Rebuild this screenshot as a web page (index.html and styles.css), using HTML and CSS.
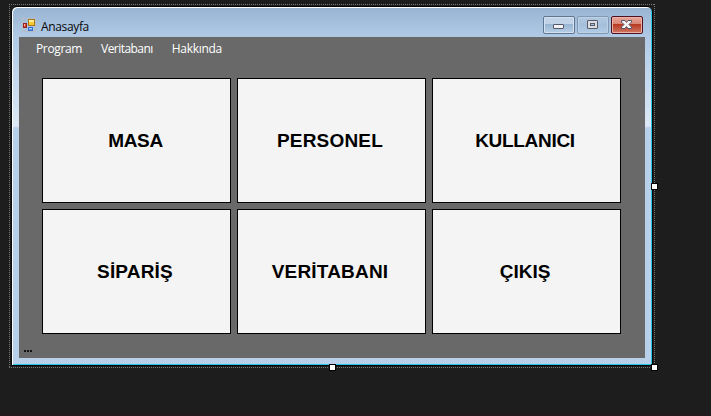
FILE: index.html
```html
<!DOCTYPE html>
<html lang="tr">
<head>
<meta charset="utf-8">
<title>Anasayfa</title>
<link rel="stylesheet" href="styles.css">
</head>
<body>
<main class="selection">
  <svg class="outline" width="646" height="364" viewBox="0 0 646 364" shape-rendering="crispEdges"><path d="M0 .5H646M0 363.5H646M.5 0V364M645.5 0V364" stroke="#777" stroke-dasharray="1 1"/></svg>
  <section class="window">
    <header class="titlebar">
      <svg class="app-icon" width="14" height="14" viewBox="0 0 14 14" shape-rendering="crispEdges">
        <path d="M.5 13.500V.5H13.500V13.500Z" fill="none" stroke="#b8bcc3"/>
        <rect x="6.500" y="1.500" width="6" height="6" fill="#f8c832" stroke="#a77a16"/><path d="M7 2h5v2H7z" fill="#ffed9c"/>
        <rect x="1.500" y="5.500" width="3" height="4" fill="#d64a36" stroke="#952222"/><path d="M2 6h1v2H2z" fill="#ffb0a0"/>
        <rect x="6.500" y="9.500" width="4" height="3" fill="#609df4" stroke="#3970c8"/><path d="M7 10h3v1H7z" fill="#a4cbff"/>
      </svg>
      <h1 class="title">Anasayfa</h1>
      <div class="controls">
        <span class="control"><svg width="30" height="16" viewBox="0 0 30 16"><rect x="9.500" y="7.500" width="10" height="4" rx=".5" fill="#f4f4f4" stroke="#57586b"/></svg></span>
        <span class="control disabled"><svg width="30" height="16" viewBox="0 0 30 16"><rect x="9.500" y="3.500" width="10" height="8" rx=".5" fill="#dcdce0" stroke="#565b6b"/><rect x="12.500" y="6.500" width="4" height="2" fill="#a9c3de" stroke="#565b6b"/></svg></span>
        <span class="control close"><svg width="30" height="16" viewBox="0 0 30 16"><path d="M9.500 3.500h3.500l1.500 2 1.500-2h3.500v1.500L17 7.500l2.500 2.500v1.500H16l-1.500-2-1.500 2H9.500V10L12 7.500 9.500 5z" fill="#f5f5f5" stroke="#52566a"/></svg></span>
      </div>
    </header>
    <div class="client">
      <nav class="menu"><span>Program</span><span class="database">Veritabanı</span><span class="about">Hakkında</span></nav>
      <div class="buttons">
        <button class="tables">MASA</button><button class="staff">PERSONEL</button><button class="users">KULLANICI</button>
        <button class="staff">SİPARİŞ</button><button class="staff">VERİTABANI</button><button>ÇIKIŞ</button>
      </div>
      <footer class="status"><i></i><i></i><i></i></footer>
    </div>
  </section>
  <b class="handle right"></b><b class="handle bottom"></b><b class="handle corner"></b>
</main>
</body>
</html>
```
FILE: styles.css
```css
* { box-sizing: border-box; }
body { margin: 0; width: 711px; height: 416px; overflow: hidden; background: #1d1d1d; border-bottom: 2px solid #211a1e; font-family: "Open Sans", "Noto Sans", sans-serif; }
.selection { position: relative; width: 646px; height: 364px; margin: 4px 0 0 9px; padding: 2px; }
.outline { position: absolute; inset: 0; }
.window { width: 642px; height: 360px; border: 1px solid #050708; border-radius: 6px 6px 0 0; padding: 0 7px 6px; background: linear-gradient(#98b4d2, #b0cae6 30px, #dce8f5 119px, #b8d0ea 121px); box-shadow: inset 1px 1px #fff, inset -1px -1px #27c6e6; }
.titlebar { height: 30px; display: flex; align-items: flex-start; padding: 11px 2px 0 3px; }
.app-icon { flex: none; }
.title { margin: 0 0 0 5px; font-size: 12px; line-height: 17px; font-weight: 400; color: #080808; letter-spacing: -.35px; }
.controls { display: flex; gap: 2px; margin: -2px 0 0 auto; }
.control { width: 32px; height: 18px; border: 1px solid #60758f; border-radius: 2px; background: linear-gradient(#c0d3e7 0 45%, #98b5d2 46%, #b8cfe6); box-shadow: inset 0 0 0 1px #d3e2f1; }
.control svg { display: block; }
.disabled { border-color: #8299b3; box-shadow: inset 0 0 0 1px #bdd1e6; background: linear-gradient(#b2c8df, #a5bfdb 50%, #b3cbe4); }
.close { border-color: #50101d; background: linear-gradient(#e8a79b 0%, #d98473 44%, #b83922 46%, #d07965); box-shadow: inset 0 0 0 1px #eab2a7; }
.client { height: 321px; background: #696969; }
.menu { height: 41px; padding: 3px 0 0 17px; display: flex; gap: 19px; font-size: 12px; line-height: 18px; color: #fff; }
.menu span { height: 18px; white-space: nowrap; letter-spacing: -.36px; }
.menu .database { letter-spacing: -.55px; }
.menu .about { letter-spacing: -.28px; }
.buttons { display: grid; grid-template-columns: repeat(3, 189px); grid-template-rows: repeat(2, 125px); gap: 6px; margin-left: 23px; }
button { border: 1px solid #000; border-radius: 0; padding: 0 3px 0 0; background: #f4f4f4; color: #000; font: bold 19px "Liberation Sans", Arial, sans-serif; }
.tables { padding-right: 2px; letter-spacing: -.3px; }
.staff { letter-spacing: .18px; }
.users { letter-spacing: -.3px; }
.status { display: flex; gap: 1px; margin: 16px 0 0 5px; }
.status i { width: 2px; height: 2px; background: #111; }
.handle { position: absolute; width: 7px; height: 7px; background: #fff; border: 1px solid #000; }
.right { left: 642px; top: 179px; }
.bottom { left: 320px; top: 360px; }
.corner { left: 642px; top: 360px; }
```
